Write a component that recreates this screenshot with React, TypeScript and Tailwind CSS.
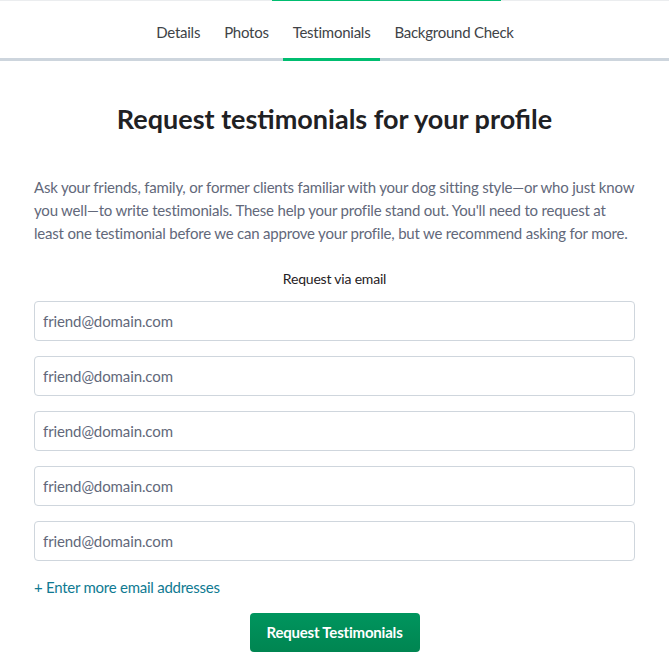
const tabs = ['Details', 'Photos', 'Testimonials', 'Background Check']

export default function App() {
  return (
    <div className="min-h-[664px] bg-white font-['Lato','Open_Sans',sans-serif] text-[#1f2124]">
      {/* top progress strip */}
      <div className="flex h-px bg-[#ebedef]">
        <div className="w-[272px]" />
        <div className="w-[229px] bg-[#00bd70]" />
      </div>

      {/* tabs */}
      <nav className="flex justify-center gap-1 border-b-[3px] border-[#cdd5dd] pl-[1px]">
        {tabs.map((t) => (
          <div
            key={t}
            className={
              'relative -mb-[3px] flex h-[60px] items-center px-[10px] pt-[6px] text-[15px] tracking-[-0.25px] text-[#404347] ' +
              (t === 'Testimonials' ? 'border-b-[3px] border-[#00bd70]' : 'border-b-[3px] border-transparent')
            }
          >
            {t}
          </div>
        ))}
      </nav>

      <main className="px-[34px] pb-3">
        <h1 className="mt-[40px] text-center text-[27px] font-bold leading-[36px] text-[#1f2124]">
          Request testimonials for your profile
        </h1>

        <p className="mt-[39px] text-[15px] leading-[23px] tracking-[-0.2px] text-[#62687a]">
          Ask your friends, family, or former clients familiar with your dog sitting style—or who just know you
          well—to write testimonials. These help your profile stand out. You'll need to request at least one
          testimonial before we can approve your profile, but we recommend asking for more.
        </p>

        <div className="mt-[24px] text-center text-[14px] leading-[20px] tracking-[-0.2px] text-[#1f2124]">
          Request via email
        </div>

        <div className="mt-[12px] flex flex-col gap-[15px]">
          {[0, 1, 2, 3, 4].map((i) => (
            <input
              key={i}
              type="email"
              placeholder="friend@domain.com"
              className="h-10 w-full rounded-[4px] border border-[#cfd6dd] px-[8px] text-[15px] tracking-[-0.1px] text-[#1f2124] outline-none placeholder:text-[#62687a]"
            />
          ))}
        </div>

        <a href="#" className="mt-[16px] block text-[15px] leading-[20px] tracking-[-0.25px] text-[#0f7a92]">
          + Enter more email addresses
        </a>

        <div className="mt-[16px] flex justify-center">
          <button className="h-[39px] w-[170px] rounded-[4px] bg-gradient-to-b from-[#00955e] to-[#008551] text-[15px] font-bold tracking-[-0.2px] text-white">
            Request Testimonials
          </button>
        </div>
      </main>
    </div>
  )
}
